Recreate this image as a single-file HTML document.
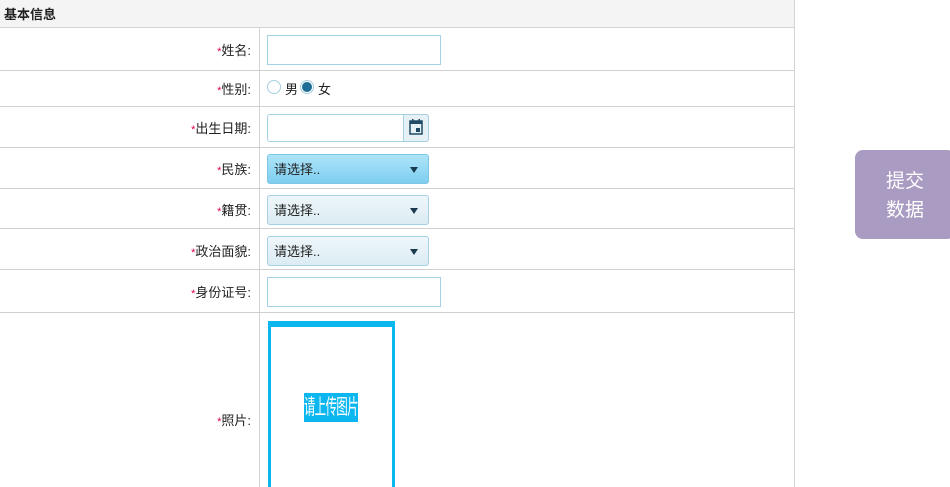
<!DOCTYPE html>
<html><head><meta charset="utf-8"><style>
*{margin:0;padding:0;box-sizing:border-box}
html,body{width:950px;height:487px;overflow:hidden}
body{background:#fff;font-family:"Liberation Sans","Noto Sans CJK SC",sans-serif;font-size:13px;color:#222;position:relative}
.hd{position:absolute;left:0;top:0;width:794px;height:28px;background:#f4f4f4;border-bottom:1px solid #d4d4d4;font-weight:bold;padding:4px 0 0 4px;font-size:13px}
.vr{position:absolute;top:0;width:1px;height:487px;background:#d4d4d4;left:794px}
.vs{position:absolute;left:259px;top:28px;width:1px;height:459px;background:#d4d4d4}
.hl{position:absolute;left:0;width:794px;height:1px;background:#d0d0d0}
.lb{position:absolute;right:699px;text-align:right;font-size:13px;white-space:nowrap}
.lb b{color:#e4004f;font-weight:normal;font-size:11px}
.in{position:absolute;left:267px;width:174px;height:30px;border:1px solid #a6d0e4;background:#fff}
.sel{position:absolute;left:267px;width:162px;height:30px;border:1px solid #a6d0e4;border-radius:3px;background:linear-gradient(#eef6fa,#dcecf3);padding:4px 0 0 6px;font-size:13px}
.sel.a{background:linear-gradient(#aee4f8,#7dcef1);border-color:#7ec5e6}
.sel:after{content:"";position:absolute;right:10px;top:12px;border-left:4px solid transparent;border-right:4px solid transparent;border-top:6px solid #1a3a50}
</style></head><body>
<div class="hd">基本信息</div>
<div class="vr"></div><div class="vs"></div>
<div class="hl" style="top:70px"></div>
<div class="hl" style="top:106px"></div>
<div class="hl" style="top:147px"></div>
<div class="hl" style="top:188px"></div>
<div class="hl" style="top:228px"></div>
<div class="hl" style="top:269px"></div>
<div class="hl" style="top:312px"></div>

<div class="lb" style="top:40px"><b>*</b>姓名:</div>
<div class="in" style="top:35px"></div>
<div class="lb" style="top:79px"><b>*</b>性别:</div>
<div style="position:absolute;left:267px;top:80px;width:14px;height:14px;border:1px solid #a6cfe0;border-radius:50%"></div>
<div style="position:absolute;left:285px;top:79px">男</div>
<div style="position:absolute;left:300px;top:80px;width:14px;height:14px;border:1px solid #a6cfe0;border-radius:50%;background:radial-gradient(#1e6e97 55%,#fff 62%)"></div>
<div style="position:absolute;left:318px;top:79px">女</div>
<div class="lb" style="top:118px"><b>*</b>出生日期:</div>
<div style="position:absolute;left:267px;top:114px;width:162px;height:28px;border:1px solid #a6d0e4;border-radius:3px;background:#fff"></div>
<div style="position:absolute;left:403px;top:114px;width:26px;height:28px;border:1px solid #a6d0e4;border-radius:0 3px 3px 0;background:#e6f1f6"></div>
<svg style="position:absolute;left:409px;top:119px" width="14" height="16" viewBox="0 0 14 16"><rect x="1" y="2" width="12" height="13" fill="none" stroke="#1e4a66" stroke-width="1.5"/><rect x="1" y="2" width="12" height="3" fill="#1e4a66"/><rect x="3" y="0" width="1.5" height="3" fill="#1e4a66"/><rect x="9.5" y="0" width="1.5" height="3" fill="#1e4a66"/><rect x="7" y="9" width="4" height="4" fill="#1e4a66"/></svg>
<div class="lb" style="top:159px"><b>*</b>民族:</div>
<div class="sel a" style="top:154px">请选择..</div>
<div class="lb" style="top:200px"><b>*</b>籍贯:</div>
<div class="sel" style="top:195px">请选择..</div>
<div class="lb" style="top:241px"><b>*</b>政治面貌:</div>
<div class="sel" style="top:236px">请选择..</div>
<div class="lb" style="top:282px"><b>*</b>身份证号:</div>
<div class="in" style="top:277px"></div>
<div class="lb" style="top:410px"><b>*</b>照片:</div>
<div style="position:absolute;left:268px;top:321px;width:127px;height:180px;border:3px solid #0bb7ee;border-top-width:6px"></div>
<div style="position:absolute;left:304px;top:393px;width:54px;height:29px;background:#0bb7ee"></div>
<div style="position:absolute;left:304px;top:393px;height:29px;color:#fff;font-size:21px;line-height:29px;white-space:nowrap;letter-spacing:-1px;transform:scaleX(0.54);transform-origin:left">请上传图片</div>
<div style="position:absolute;left:855px;top:150px;width:100px;height:89px;background:#a99bc2;border-radius:8px;color:#fff;font-size:19px;line-height:29px;padding:17px 0 0 31px">提交<br>数据</div>
</body></html>
